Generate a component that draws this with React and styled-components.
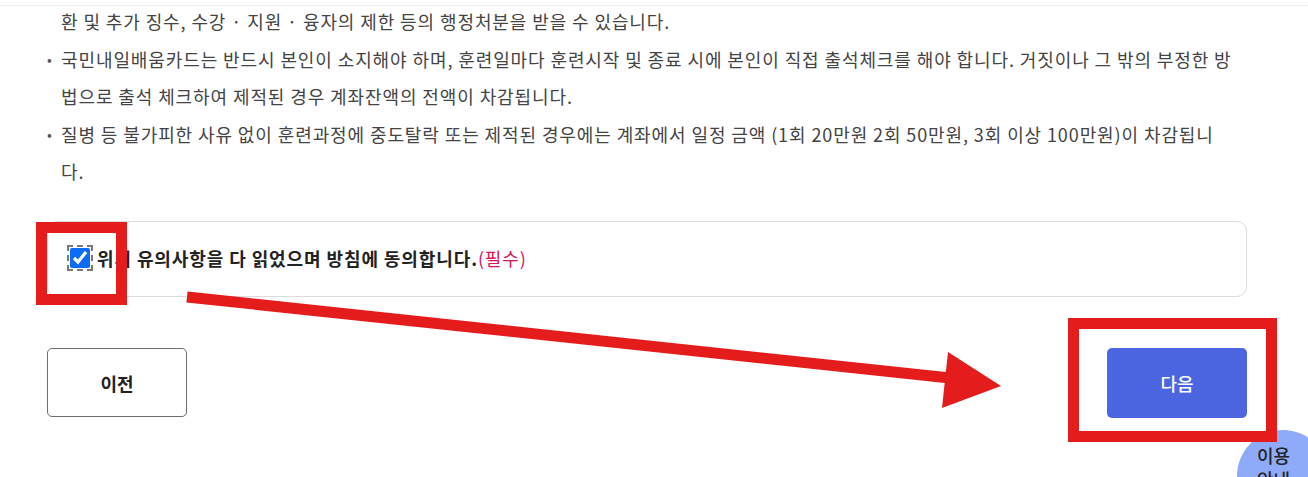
import React, { useState } from "react";
import styled, { createGlobalStyle } from "styled-components";

const GlobalStyle = createGlobalStyle`
  html, body {
    margin: 0;
    padding: 0;
    background: #fff;
    overflow: hidden;
  }
  body {
    font-family: "Noto Sans CJK KR", "Noto Sans", sans-serif;
    color: #444;
  }
`;

// each notice is kept as its rendered lines so the wrap matches the source page
const notices = [
  {
    bullet: false,
    lines: ["환 및 추가 징수, 수강 · 지원 · 융자의 제한 등의 행정처분을 받을 수 있습니다."],
  },
  {
    bullet: true,
    lines: [
      "국민내일배움카드는 반드시 본인이 소지해야 하며, 훈련일마다 훈련시작 및 종료 시에 본인이 직접 출석체크를 해야 합니다. 거짓이나 그 밖의 부정한 방",
      "법으로 출석 체크하여 제적된 경우 계좌잔액의 전액이 차감됩니다.",
    ],
  },
  {
    bullet: true,
    lines: [
      "질병 등 불가피한 사유 없이 훈련과정에 중도탈락 또는 제적된 경우에는 계좌에서 일정 금액 (1회 20만원 2회 50만원, 3회 이상 100만원)이 차감됩니",
      "다.",
    ],
  },
];

function App() {
  const [agreed, setAgreed] = useState(true);

  return (
    <>
      <GlobalStyle />
      <Page>
        <TopRule />
        <NoticeList>
          {notices.map((n, i) => (
            <NoticeItem key={i} bullet={n.bullet}>
              {n.lines.map((line, j) => (
                <NoticeLine key={j}>{line}</NoticeLine>
              ))}
            </NoticeItem>
          ))}
        </NoticeList>

        <AgreeBox>
          <AgreeLabel>
            <Check
              type="checkbox"
              checked={agreed}
              onChange={(e) => setAgreed(e.target.checked)}
            />
            <AgreeText>
              위의 유의사항을 다 읽었으며 방침에 동의합니다.
              <Required>(필수)</Required>
            </AgreeText>
          </AgreeLabel>
        </AgreeBox>

        <ButtonRow>
          <PrevButton>이전</PrevButton>
          <NextButton>다음</NextButton>
        </ButtonRow>

        <Highlight style={{ left: 36, top: 222, width: 91, height: 83 }} />
        <Highlight style={{ left: 1068, top: 318, width: 209, height: 124 }} />
        <ArrowLayer width="1308" height="477" viewBox="0 0 1308 477">
          <line
            x1="187"
            y1="297"
            x2="950"
            y2="378"
            stroke="#e41c1c"
            strokeWidth="11"
          />
          <polygon points="948,352 1001,386 942,408" fill="#e41c1c" />
        </ArrowLayer>

        <GuideBubble>
          이용
          <br />
          안내
        </GuideBubble>
      </Page>
    </>
  );
}

export default App;

const Page = styled.div`
  position: relative;
  width: 1308px;
  height: 477px;
  overflow: hidden;
  padding: 0 61px 0 47px;
  box-sizing: border-box;
`;

const TopRule = styled.div`
  height: 1px;
  background: #ececec;
  margin: 5px -61px 0 -47px;
`;

const NoticeList = styled.ul`
  list-style: none;
  margin: -3px 0 0;
  padding: 0;
`;

const NoticeItem = styled.li`
  position: relative;
  padding-left: 14px;
  font-size: 18px;
  line-height: 37.5px;
  color: #444;
  letter-spacing: 0.9px;

  &::before {
    content: ${(p) => (p.bullet ? '"•"' : '""')};
    position: absolute;
    left: 0;
    top: 0;
    font-size: 14px;
    color: #555;
  }
`;

const NoticeLine = styled.span`
  display: block;
  white-space: nowrap;
`;

const AgreeBox = styled.div`
  margin-top: 30px;
  height: 76px;
  border: 1px solid #dcdcdc;
  border-radius: 10px;
  box-sizing: border-box;
  display: flex;
  align-items: center;
  padding: 0 20px 2px 22px;
`;

const AgreeLabel = styled.label`
  display: flex;
  align-items: center;
  gap: 7px;
  cursor: pointer;
`;

const Check = styled.input`
  width: 20px;
  height: 20px;
  margin: 0;
  accent-color: #0b6cf5;
  outline: 2px dashed #7a7a7a;
  outline-offset: 1px;
`;

const AgreeText = styled.span`
  font-size: 18px;
  font-weight: 700;
  color: #222;
  letter-spacing: 0.9px;
`;

const Required = styled.span`
  font-weight: 400;
  color: #d4145a;
`;

const ButtonRow = styled.div`
  margin-top: 51px;
  display: flex;
  justify-content: space-between;
  align-items: center;
`;

const BaseButton = styled.button`
  width: 140px;
  height: 70px;
  border-radius: 5px;
  font-family: "Noto Sans CJK KR", "Noto Sans", sans-serif;
  font-size: 18px;
  font-weight: 700;
  cursor: pointer;
`;

const PrevButton = styled(BaseButton)`
  height: 69px;
  background: #fff;
  color: #222;
  border: 1px solid #6f6f6f;
`;

const NextButton = styled(BaseButton)`
  background: #4b66e0;
  color: #fff;
  border: none;
  font-weight: 500;
`;

const Highlight = styled.div`
  position: absolute;
  border: 11px solid #e41c1c;
  box-sizing: border-box;
  pointer-events: none;
  z-index: 3;
`;

const ArrowLayer = styled.svg`
  position: absolute;
  left: 0;
  top: 0;
  pointer-events: none;
  z-index: 3;
`;

const GuideBubble = styled.div`
  position: absolute;
  left: 1237px;
  top: 430px;
  width: 92px;
  height: 92px;
  border-radius: 50%;
  background: #8eaaf8;
  color: #222;
  font-size: 18px;
  font-weight: 500;
  line-height: 24px;
  box-sizing: border-box;
  padding: 13px 0 0 20px;
  z-index: 2;
`;
